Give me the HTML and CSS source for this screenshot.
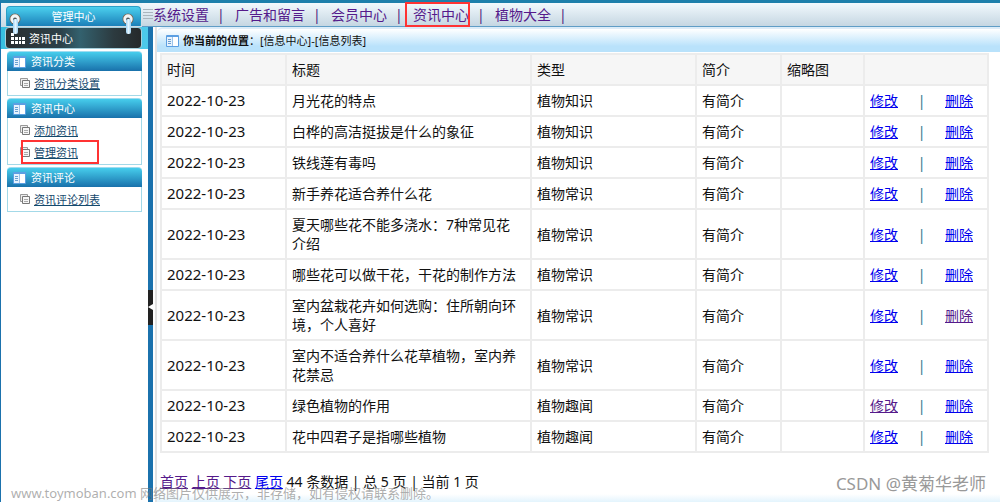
FILE: index.html
```html
<!DOCTYPE html>
<html lang="zh-CN">
<head>
<meta charset="utf-8">
<title>管理中心</title>
<link rel="stylesheet" href="styles.css">
</head>
<body>
<svg class="defs" aria-hidden="true">
  <defs>
    <linearGradient id="pin" x1="0" y1="0" x2="1" y2="0"><stop offset="0" stop-color="#9fd2f4"/><stop offset=".5" stop-color="#e4f5ff"/><stop offset="1" stop-color="#9fd2f4"/></linearGradient>
    <symbol id="clip" viewBox="0 0 12 22">
      <circle cx="6" cy="6" r="5.500" fill="#78624e"/>
      <circle cx="6" cy="6" r="4.700" fill="#f2f5f6"/>
      <circle cx="6" cy="6.500" r="2" fill="#4c5558"/>
      <rect x="4" y="6" width="5" height="15" rx="2" fill="url(#pin)"/>
    </symbol>
    <symbol id="panel" viewBox="0 0 13 12">
      <rect width="13" height="12" rx="1" fill="#5c9fe2"/>
      <rect x="1" y="2" width="5" height="9" fill="#e6f2fd"/>
      <rect x="6" y="2" width="6" height="9" fill="#fff"/>
      <path d="M2 4.500h3M2 6.500h3M2 8.500h3" stroke="#6b9fd0"/>
      <path d="M6.500 2v9" stroke="#9cc4ea"/>
    </symbol>
    <symbol id="copy" viewBox="0 0 10 10">
      <path d="M.5 .5h7v7h-7z" fill="#eee" stroke="#999"/>
      <path d="M2.500 2.500h7v7h-7z" fill="#f6f6f6" stroke="#777"/>
      <path d="M4 5.500h4M4 7.500h4" stroke="#aaa"/>
    </symbol>
  </defs>
</svg>
<header class="top">
  <div class="brand">
    <h1 class="brand-title">管理中心</h1>
    <svg class="clip clip-left" aria-hidden="true"><use href="#clip"/></svg>
    <svg class="clip clip-right" aria-hidden="true"><use href="#clip"/></svg>
  </div>
  <nav class="nav">
    <span class="grip"></span>
    <a href="#">系统设置</a><span class="bar">|</span>
    <a href="#">广告和留言</a><span class="bar">|</span>
    <a href="#">会员中心</a><span class="bar">|</span>
    <a href="#" class="current">资讯中心</a><span class="bar">|</span>
    <a href="#">植物大全</a><span class="bar">|</span>
  </nav>
</header>
<div class="layout">
  <aside class="side">
    <div class="side-head">
      <h2 class="side-title">
        <svg class="dots" viewBox="0 0 14 11" aria-hidden="true"><path d="M0 0h3v3h-3zM0 4h3v3h-3zM4 4h3v3h-3zM8 4h2v3h-2zM11 4h3v3h-3zM0 8h3v3h-3zM4 8h3v3h-3zM8 8h2v3h-2zM11 8h3v3h-3z" fill="#fff"/></svg>
        资讯中心
      </h2>
    </div>
    <section class="group">
      <h3><svg class="panel" aria-hidden="true"><use href="#panel"/></svg>资讯分类</h3>
      <ul>
        <li><svg class="copy" aria-hidden="true"><use href="#copy"/></svg><a href="#">资讯分类设置</a></li>
      </ul>
    </section>
    <section class="group">
      <h3><svg class="panel" aria-hidden="true"><use href="#panel"/></svg>资讯中心</h3>
      <ul>
        <li><svg class="copy" aria-hidden="true"><use href="#copy"/></svg><a href="#">添加资讯</a></li>
        <li class="marked"><svg class="copy" aria-hidden="true"><use href="#copy"/></svg><a href="#">管理资讯</a></li>
      </ul>
    </section>
    <section class="group">
      <h3><svg class="panel" aria-hidden="true"><use href="#panel"/></svg>资讯评论</h3>
      <ul>
        <li><svg class="copy" aria-hidden="true"><use href="#copy"/></svg><a href="#">资讯评论列表</a></li>
      </ul>
    </section>
  </aside>
  <div class="splitter">
    <button class="toggle" type="button" aria-label="收起菜单"><svg viewBox="0 0 5 8" aria-hidden="true"><path d="M0 4l5-3v6z" fill="#fff"/></svg></button>
  </div>
  <main class="main">
    <div class="crumbs"><svg class="panel" aria-hidden="true"><use href="#panel"/></svg><b>你当前的位置</b>：[信息中心]-[信息列表]</div>
    <table class="list">
      <colgroup><col class="c-date"><col><col class="c-type"><col class="c-intro"><col class="c-thumb"><col class="c-act"></colgroup>
      <thead>
        <tr><th>时间</th><th>标题</th><th>类型</th><th>简介</th><th>缩略图</th><th></th></tr>
      </thead>
      <tbody>
        <tr><td class="date">2022-10-23</td><td class="title">月光花的特点</td><td>植物知识</td><td>有简介</td><td></td><td><div class="acts"><a href="#">修改</a><span>|</span><a href="#">删除</a></div></td></tr>
        <tr><td class="date">2022-10-23</td><td class="title">白桦的高洁挺拔是什么的象征</td><td>植物知识</td><td>有简介</td><td></td><td><div class="acts"><a href="#">修改</a><span>|</span><a href="#">删除</a></div></td></tr>
        <tr><td class="date">2022-10-23</td><td class="title">铁线莲有毒吗</td><td>植物知识</td><td>有简介</td><td></td><td><div class="acts"><a href="#">修改</a><span>|</span><a href="#">删除</a></div></td></tr>
        <tr><td class="date">2022-10-23</td><td class="title">新手养花适合养什么花</td><td>植物常识</td><td>有简介</td><td></td><td><div class="acts"><a href="#">修改</a><span>|</span><a href="#">删除</a></div></td></tr>
        <tr><td class="date">2022-10-23</td><td class="title">夏天哪些花不能多浇水：7种常见花介绍</td><td>植物常识</td><td>有简介</td><td></td><td><div class="acts"><a href="#">修改</a><span>|</span><a href="#">删除</a></div></td></tr>
        <tr><td class="date">2022-10-23</td><td class="title">哪些花可以做干花，干花的制作方法</td><td>植物常识</td><td>有简介</td><td></td><td><div class="acts"><a href="#">修改</a><span>|</span><a href="#">删除</a></div></td></tr>
        <tr><td class="date">2022-10-23</td><td class="title">室内盆栽花卉如何选购：住所朝向环境，个人喜好</td><td>植物常识</td><td>有简介</td><td></td><td><div class="acts"><a href="#">修改</a><span>|</span><a href="#" class="seen">删除</a></div></td></tr>
        <tr><td class="date">2022-10-23</td><td class="title">室内不适合养什么花草植物，室内养花禁忌</td><td>植物常识</td><td>有简介</td><td></td><td><div class="acts"><a href="#">修改</a><span>|</span><a href="#">删除</a></div></td></tr>
        <tr><td class="date">2022-10-23</td><td class="title">绿色植物的作用</td><td>植物趣闻</td><td>有简介</td><td></td><td><div class="acts"><a href="#" class="seen">修改</a><span>|</span><a href="#">删除</a></div></td></tr>
        <tr><td class="date">2022-10-23</td><td class="title">花中四君子是指哪些植物</td><td>植物趣闻</td><td>有简介</td><td></td><td><div class="acts"><a href="#">修改</a><span>|</span><a href="#">删除</a></div></td></tr>
      </tbody>
    </table>
    <div class="pager"><a href="#" class="seen">首页</a> <a href="#" class="seen">上页</a> <a href="#" class="seen">下页</a> <a href="#">尾页</a> 44 条数据 | 总 5 页 | 当前 1 页</div>
  </main>
</div>
<div class="note">www.toymoban.com 网络图片仅供展示，非存储，如有侵权请联系删除。</div>
<div class="author">CSDN @黄菊华老师</div>
</body>
</html>
```
FILE: styles.css
```css
* { box-sizing: border-box; }
body {
  margin: 0;
  min-height: 100vh;
  display: flex;
  flex-direction: column;
  position: relative;
  background: #fff;
  color: #111;
  font: 14px/19px "Noto Sans", "Noto Sans CJK SC", sans-serif;
}
h1, h2, h3, ul { margin: 0; padding: 0; font-weight: 400; list-style: none; }
svg { flex: none; }
.defs { position: absolute; width: 0; height: 0; }

.top {
  display: flex;
  height: 27px;
  border-top: 3px solid #1d7fab;
  border-left: 1px solid #1b72ad;
}
.brand {
  position: relative;
  width: 141px;
  padding: 3px 1px 0 5px;
  background: linear-gradient(#eef5f9, #c9dae5);
}
.brand-title {
  height: 20px;
  border: 1px solid #2b9fc6;
  border-bottom: 0;
  border-radius: 4px 4px 0 0;
  background: linear-gradient(#4bd0ee, #1b7fb8);
  color: #fff;
  font-size: 11px;
  line-height: 20px;
  text-align: center;
}
.clip { position: absolute; z-index: 1; top: 10px; width: 12px; height: 22px; }
.clip-left { left: 8px; }
.clip-right { right: 8px; }
.nav {
  flex: 1;
  display: flex;
  align-items: center;
  border-bottom: 1px solid #5f9dc6;
  background: linear-gradient(#f2f9fd, #c5d6e2);
  color: #4b1d7f;
  white-space: nowrap;
}
.grip {
  width: 10px;
  height: 12px;
  margin-left: 1px;
  background: repeating-linear-gradient(#aab6be 0 1px, transparent 1px 3px);
}
.nav a { color: #551a8b; text-decoration: none; }
.nav .current { position: relative; }
.current::after {
  content: "";
  position: absolute;
  inset: -3px -1px -3px -8px;
  border: 2px solid #f33;
}
.bar { width: 26px; padding-left: 8px; }

.layout { flex: 1; display: flex; }
.side { width: 148px; border-left: 1px solid #1b72ad; }
.side-head { height: 22px; padding: 0 6px 0 4px; background: linear-gradient(90deg, #38bfe0, #4cc9ea); }
.side-title {
  display: flex;
  align-items: center;
  gap: 4px;
  height: 22px;
  padding-left: 5px;
  border: 1px solid #a5cfdc;
  border-radius: 4px;
  background: linear-gradient(90deg, #2a2e30, #2c4048 40%, #33616e 55%, #2c3a3f 80%, #25292b);
  color: #fff;
  font-size: 11px;
}
.dots { width: 14px; height: 11px; }
.group { margin: 2px 6px 0; }
.group h3 {
  display: flex;
  align-items: center;
  gap: 5px;
  height: 20px;
  padding-left: 6px;
  border-top: 1px solid #9edcf0;
  border-radius: 4px 4px 0 0;
  background: linear-gradient(#46cdec, #1971ab);
  color: #fff;
  font-size: 11px;
}
.panel { width: 13px; height: 12px; }
.group ul { padding: 1px 0; border: 1px solid #a3d9e8; border-top: 0; }
.group li { display: flex; align-items: center; gap: 4px; height: 22px; padding-left: 12px; }
.group a { color: #14496d; font-size: 11px; text-underline-offset: 1px; }
.copy { width: 10px; height: 10px; }
.marked { position: relative; }
.marked::after {
  content: "";
  position: absolute;
  inset: -1px 42px -1px 13px;
  border: 2px solid #f33;
}

.splitter { display: flex; align-items: center; width: 5px; background: #1b72ad; }
.toggle { width: 5px; height: 35px; margin-top: 85px; padding: 0; border: 0; background: #222; }
.toggle svg { display: block; width: 5px; height: 8px; }

.main {
  flex: 1;
  min-width: 0;
  margin-left: 2px;
  border-left: 2px solid #e3e3e3;
  background: linear-gradient(0deg, #e3f4fd, #fff 8px);
}
.crumbs {
  display: flex;
  align-items: center;
  height: 25px;
  padding-left: 9px;
  border-top: 2px solid #dcecf8;
  border-radius: 6px 0 0 0;
  background: linear-gradient(#fff, #b9e2fb 75%);
  font-size: 11px;
}
.crumbs .panel { margin-right: 4px; }
.list {
  width: calc(100% - 14px);
  margin: 1px 11px 0 3px;
  table-layout: fixed;
  border-collapse: separate;
  border-spacing: 2px;
  background: #ececec;
}
.c-date { width: 123px; }
.c-type { width: 163px; }
.c-intro { width: 83px; }
.c-thumb { width: 81px; }
.c-act { width: 122px; }
.list th, .list td { height: 29px; padding: 5px; background: #fff; text-align: left; font-weight: 400; }
.list th { background: #f6f6f6; }
.list .date { font-size: 15px; }
.list .title { padding-right: 10px; }
.acts { display: flex; justify-content: space-between; padding-right: 9px; }
.acts span { color: #28788c; }
a { color: #00e; }
.seen { color: #551a8b; }
.pager { padding: 19px 3px 0; }

.note, .author { position: absolute; white-space: nowrap; pointer-events: none; }
.note { left: 11px; bottom: 0; color: rgba(120, 120, 120, .6); font-size: 13px; line-height: 17px; }
.author { right: 14px; bottom: 6px; color: #999; font-size: 17px; line-height: 24px; }
```
